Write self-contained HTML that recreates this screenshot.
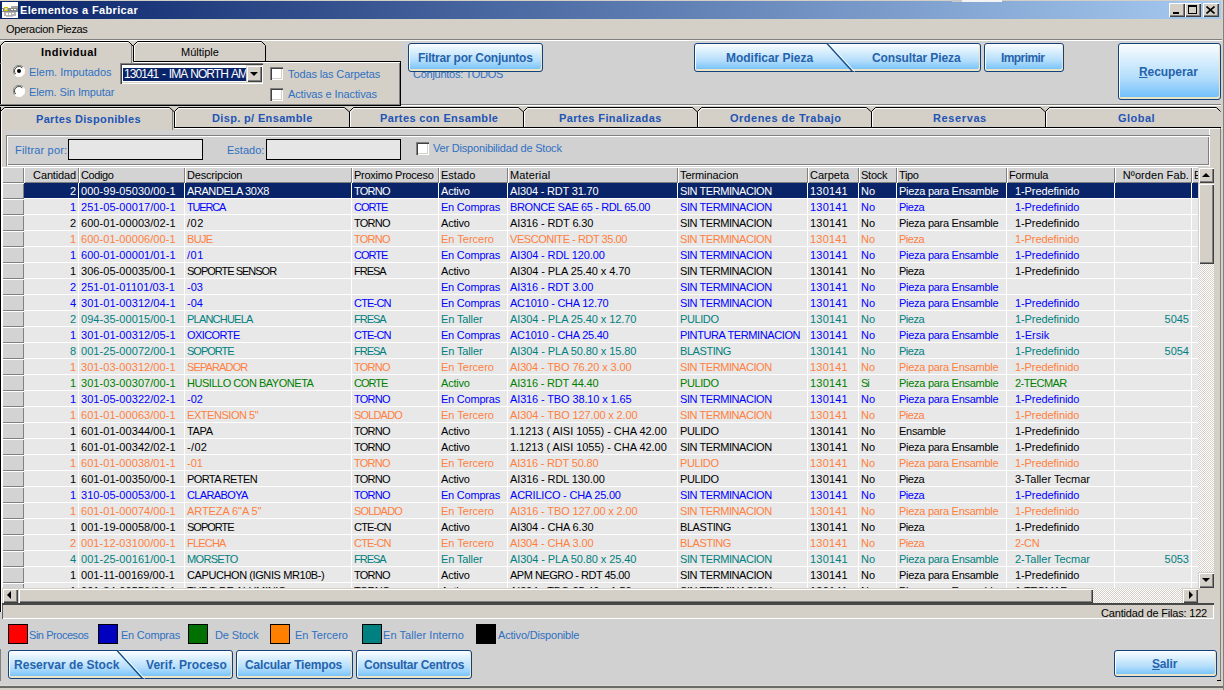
<!DOCTYPE html>
<html><head><meta charset="utf-8"><title>Elementos a Fabricar</title><style>
*{box-sizing:border-box;margin:0;padding:0}
html,body{width:1224px;height:690px;overflow:hidden;background:#d4d0c8;font-family:"Liberation Sans",sans-serif;font-size:11px;color:#000}
.a{position:absolute}
.t{position:absolute;white-space:pre;line-height:14px}
.b{font-weight:bold}
.btn{position:absolute;border:1px solid #10427e;border-radius:3px;background:linear-gradient(#fbfdff 0%,#d9effd 28%,#b3ddfb 62%,#6cbef9 100%);box-shadow:inset 1px 1px 0 #fff, inset -1px -2px 0 #ede4c6}
.bt{position:absolute;white-space:pre;color:#2563ad;font-weight:bold;font-size:12px;line-height:14px}
.lbl{color:#2f70c2}
.cell{position:absolute;height:15px;overflow:hidden;white-space:pre;line-height:15px;padding-top:1px}
.hdr{position:absolute;height:15px;overflow:hidden;white-space:pre;line-height:15px;padding-top:1px;background:#d3d3d3;box-shadow:inset 1px 1px 0 #fff,inset -1px -1px 0 #808080}
.tab{position:absolute;color:#2254b4;font-weight:bold;white-space:pre;line-height:14px;text-align:center}
.sb{position:absolute;background:#d4d0c8;box-shadow:inset 1px 1px 0 #d4d0c8,inset 2px 2px 0 #fff,inset -1px -1px 0 #404040,inset -2px -2px 0 #808080}
.chk{position:absolute;width:13px;height:13px;background:#fff;box-shadow:inset 1px 1px 0 #808080,inset 2px 2px 0 #404040,inset -1px -1px 0 #fff,inset -2px -2px 0 #d4d0c8}
</style></head><body>
<div class="a" style="left:0;top:1px;width:1221px;height:18px;background:linear-gradient(90deg,#0a246a 0%,#a6caf0 100%)"></div>
<div class="a" style="left:1223px;top:0;width:1px;height:690px;background:#808080"></div>
<div class="a" style="left:2px;top:2px;width:16px;height:16px;background:#fff"></div>
<svg class="a" style="left:2px;top:2px" width="16" height="16" shape-rendering="crispEdges"><rect x="0" y="6" width="16" height="4" fill="#8a8a8a"/><rect x="9" y="4" width="7" height="2" fill="#a8a8a8"/><rect x="2" y="10" width="12" height="4" fill="#b4b4b4"/><rect x="4" y="14" width="7" height="1" fill="#c8c8c8"/><rect x="9" y="7" width="2" height="1" fill="#fff"/><rect x="12" y="7" width="2" height="1" fill="#fff"/><rect x="0" y="7" width="1" height="2" fill="#fff"/><rect x="4" y="11" width="2" height="2" fill="#fff"/><rect x="7" y="11" width="2" height="2" fill="#fff"/><rect x="10" y="11" width="2" height="1" fill="#fff"/><rect x="2" y="5" width="4" height="4" rx="1" fill="#c4c400"/><rect x="3" y="6" width="2" height="2" fill="#d8d8f0"/></svg>
<div class="t b" style="left:20px;top:3px;color:#fff;font-size:11px;letter-spacing:0.342px">Elementos a Fabricar</div>
<div class="a" style="left:952px;top:0;width:10px;height:2px;background:#c8c8c8"></div><div class="a" style="left:962px;top:0;width:40px;height:2px;background:#f4f4f4"></div>
<div class="a" style="left:1169px;top:3px;width:16px;height:14px;background:#d4d0c8;box-shadow:inset 1px 1px 0 #fff,inset -1px -1px 0 #404040,inset -2px -2px 0 #808080"></div>
<div class="a" style="left:1185px;top:3px;width:16px;height:14px;background:#d4d0c8;box-shadow:inset 1px 1px 0 #fff,inset -1px -1px 0 #404040,inset -2px -2px 0 #808080"></div>
<div class="a" style="left:1203px;top:3px;width:16px;height:14px;background:#d4d0c8;box-shadow:inset 1px 1px 0 #fff,inset -1px -1px 0 #404040,inset -2px -2px 0 #808080"></div>
<div class="a" style="left:1173px;top:12px;width:6px;height:2px;background:#000"></div>
<div class="a" style="left:1188px;top:5px;width:9px;height:9px;border:1px solid #000;border-top-width:2px"></div>
<svg class="a" style="left:1206px;top:6px" width="9" height="8"><path d="M0.5 0.5 L8.5 7.5 M8.5 0.5 L0.5 7.5" stroke="#000" stroke-width="1.6"/></svg>
<div class="t " style="left:6px;top:22px;letter-spacing:-0.333px;">Operacion Piezas</div>
<div class="a" style="left:0;top:39px;width:1222px;height:1px;background:#808080"></div>
<div class="a" style="left:0;top:40px;width:1222px;height:1px;background:#fff"></div>
<div class="a" style="left:401px;top:41px;width:820px;height:63px;background:#d1d1d1"></div>
<div class="a" style="left:401px;top:104px;width:820px;height:1px;background:#808080"></div>
<div class="a" style="left:401px;top:105px;width:820px;height:1px;background:#fff"></div>
<div class="a" style="left:0;top:45px;width:1px;height:60px;background:#000"></div>
<div class="a" style="left:1px;top:45px;width:1px;height:59px;background:#fff"></div>
<div class="a" style="left:0;top:104px;width:401px;height:1px;background:#808080"></div>
<div class="a" style="left:0;top:105px;width:401px;height:1px;background:#000"></div>
<div class="a" style="left:399px;top:62px;width:1px;height:42px;background:#808080"></div>
<div class="a" style="left:400px;top:61px;width:1px;height:45px;background:#000"></div>
<svg class="a" style="left:0;top:40px" width="402" height="24">
<path d="M0.5 24 V5.5 L4.5 1.5 H128.5 L133 6 V24 Z" fill="#d4d0c8" stroke="none"/>
<path d="M0.5 23 V5.5 L4.5 1.5 H128.5 L133 6" fill="none" stroke="#000"/>
<path d="M1.5 23 V5.9 L4.9 2.5 H128" fill="none" stroke="#fff"/>
<path d="M131.5 5 V24" stroke="#808080"/>
<path d="M133.5 21.5 V5.5 L137.5 1.5 H261.5 L265.5 5.5 V21.5 Z" fill="#d4d0c8" stroke="#000"/>
<path d="M134.5 21 V5.9 L137.9 2.5 H261" fill="none" stroke="#fff"/>
<path d="M265 21.5 H400.5 V24" fill="none" stroke="#000"/>
<path d="M134 22.5 H400" stroke="#fff"/>
</svg>
<div class="t b" style="left:41px;top:45px;letter-spacing:0.5px">Individual</div>
<div class="t " style="left:181px;top:45px;letter-spacing:0.0px;">Múltiple</div>
<svg class="a" style="left:13px;top:65px" width="12" height="12"><circle cx="6" cy="6" r="5.5" fill="#fff"/><path d="M10.2 2.2 A5.5 5.5 0 0 0 1.8 9.8" stroke="#808080" fill="none"/><path d="M9.3 2.9 A4.5 4.5 0 0 0 2.7 9.1" stroke="#404040" fill="none"/><path d="M1.8 9.8 A5.5 5.5 0 0 0 10.2 2.2" stroke="#fff" fill="none"/><circle cx=6 cy=6 r=2 fill=#000 /></svg>
<div class="t lbl" style="left:29px;top:65px;letter-spacing:0.0px;">Elem. Imputados</div>
<svg class="a" style="left:13px;top:85px" width="12" height="12"><circle cx="6" cy="6" r="5.5" fill="#fff"/><path d="M10.2 2.2 A5.5 5.5 0 0 0 1.8 9.8" stroke="#808080" fill="none"/><path d="M9.3 2.9 A4.5 4.5 0 0 0 2.7 9.1" stroke="#404040" fill="none"/><path d="M1.8 9.8 A5.5 5.5 0 0 0 10.2 2.2" stroke="#fff" fill="none"/></svg>
<div class="t lbl" style="left:29px;top:85px;letter-spacing:-0.125px;">Elem. Sin Imputar</div>
<div class="a" style="left:120px;top:63px;width:143px;height:21px;background:#fff;box-shadow:inset 1px 1px 0 #808080,inset 2px 2px 0 #404040,inset -1px -1px 0 #fff,inset -2px -2px 0 #d4d0c8"></div>
<div class="t" style="left:123px;top:68px;width:123px;height:13px;background:#0a246a;color:#fff;line-height:13px;overflow:hidden;font-size:12px;letter-spacing:-0.95px;word-spacing:1.3px;padding-left:1px">130141 - IMA NORTH AMERICA</div>
<div class="sb" style="left:246px;top:65px;width:16px;height:17px"></div>
<div class="a" style="left:250px;top:72px;width:0;height:0;border-left:4px solid transparent;border-right:4px solid transparent;border-top:4px solid #000"></div>
<div class="chk" style="left:270px;top:67px"></div>
<div class="t lbl" style="left:288px;top:67px;letter-spacing:-0.118px;">Todas las Carpetas</div>
<div class="chk" style="left:270px;top:88px"></div>
<div class="t lbl" style="left:288px;top:87px;letter-spacing:-0.111px;">Activas e Inactivas</div>
<div class="t lbl" style="left:413px;top:67px;letter-spacing:-0.267px;">Conjuntos: TODOS</div>
<div class="btn" style="left:408px;top:43px;width:135px;height:29px"></div>
<div class="bt" style="left:418px;top:51px;letter-spacing:-0.225px">Filtrar por Conjuntos</div>
<div class="btn" style="left:694px;top:43px;width:287px;height:29px"></div>
<svg class="a" style="left:826px;top:43px" width="30" height="29"><path d="M1 0.5 L26.5 28.5" stroke="#154a84" stroke-width="1.3" fill="none"/><path d="M3 0.5 L28.5 28.5" stroke="#fff" stroke-width="1" fill="none"/></svg>
<div class="bt" style="left:726px;top:51px;letter-spacing:-0.014px">Modificar Pieza</div>
<div class="bt" style="left:872px;top:51px;letter-spacing:-0.1px">Consultar Pieza</div>
<div class="btn" style="left:984px;top:43px;width:80px;height:29px"></div>
<div class="bt" style="left:1001px;top:51px;letter-spacing:-0.586px">Imprimir</div>
<div class="btn" style="left:1118px;top:43px;width:103px;height:57px"></div>
<div class="bt" style="left:1139px;top:65px;letter-spacing:-0.062px"><u>R</u>ecuperar</div>
<div class="a" style="left:0;top:107px;width:1px;height:505px;background:#000"></div>
<div class="a" style="left:1px;top:111px;width:1px;height:501px;background:#fff"></div><div class="a" style="left:0;top:612px;width:2px;height:7px;background:#d1d1d1"></div>
<div class="a" style="left:2px;top:128px;width:1219px;height:490px;background:#d4d0c8"></div>
<div class="a" style="left:6px;top:129px;width:1204px;height:475px;background:#d1d1d1"></div>
<svg class="a" style="left:0;top:106px" width="1224" height="24"><path d="M1045.5 21.5 V5.5 L1049.5 1.5 H1216.5 L1221.5 6 V21.5 Z" fill="#d4d0c8" stroke="none"/><path d="M1045.5 21.5 V5.5 L1049.5 1.5 H1216.5 L1220.5 5.5 M1045 21.5 H1221" fill="none" stroke="#000"/><path d="M1046.5 21 V5.9 L1049.9 2.5 H1216" fill="none" stroke="#fff"/><path d="M1045 22.5 H1222" stroke="#fff"/><path d="M871.5 21.5 V5.5 L875.5 1.5 H1040.5 L1045.5 6 V21.5 Z" fill="#d4d0c8" stroke="#000"/><path d="M872.5 21 V5.9 L875.9 2.5 H1040" fill="none" stroke="#fff"/><path d="M871 22.5 H1046" stroke="#fff"/><path d="M697.5 21.5 V5.5 L701.5 1.5 H866.5 L871.5 6 V21.5 Z" fill="#d4d0c8" stroke="#000"/><path d="M698.5 21 V5.9 L701.9 2.5 H866" fill="none" stroke="#fff"/><path d="M697 22.5 H872" stroke="#fff"/><path d="M523.5 21.5 V5.5 L527.5 1.5 H692.5 L697.5 6 V21.5 Z" fill="#d4d0c8" stroke="#000"/><path d="M524.5 21 V5.9 L527.9 2.5 H692" fill="none" stroke="#fff"/><path d="M523 22.5 H698" stroke="#fff"/><path d="M349.5 21.5 V5.5 L353.5 1.5 H518.5 L523.5 6 V21.5 Z" fill="#d4d0c8" stroke="#000"/><path d="M350.5 21 V5.9 L353.9 2.5 H518" fill="none" stroke="#fff"/><path d="M349 22.5 H524" stroke="#fff"/><path d="M174.5 21.5 V5.5 L178.5 1.5 H344.5 L349.5 6 V21.5 Z" fill="#d4d0c8" stroke="#000"/><path d="M175.5 21 V5.9 L178.9 2.5 H344" fill="none" stroke="#fff"/><path d="M174 22.5 H350" stroke="#fff"/><path d="M0.5 24 V5.5 L4.5 1.5 H169.5 L174.5 6 V24 H0.5" fill="#d4d0c8" stroke="none"/><path d="M0.5 24 V5.5 L4.5 1.5 H169.5 L174.5 6" fill="none" stroke="#000"/><path d="M1.5 24 V5.9 L4.9 2.5 H169" fill="none" stroke="#fff"/><path d="M172.5 5 V24" stroke="#808080"/><path d="M174.5 6 V22" stroke="#000"/></svg>
<div class="tab" style="left:36px;top:112px;text-align:left;letter-spacing:0.324px">Partes Disponibles</div>
<div class="tab" style="left:212px;top:111px;text-align:left;letter-spacing:0.35px">Disp. p/ Ensamble</div>
<div class="tab" style="left:380px;top:111px;text-align:left;letter-spacing:0.372px">Partes con Ensamble</div>
<div class="tab" style="left:559px;top:111px;text-align:left;letter-spacing:0.371px">Partes Finalizadas</div>
<div class="tab" style="left:730px;top:111px;text-align:left;letter-spacing:0.488px">Ordenes de Trabajo</div>
<div class="tab" style="left:933px;top:111px;text-align:left;letter-spacing:0.614px">Reservas</div>
<div class="tab" style="left:1118px;top:111px;text-align:left;letter-spacing:0.48px">Global</div>
<div class="a" style="left:1209px;top:129px;width:1px;height:38px;background:#fff"></div>
<div class="a" style="left:6px;top:135px;width:1204px;height:31px;box-shadow:inset 1px 1px 0 #808080,inset 2px 2px 0 #fff,inset -1px -1px 0 #fff,inset -2px -2px 0 #808080"></div>
<div class="t lbl" style="left:15px;top:143px;letter-spacing:0.182px;">Filtrar por:</div>
<div class="a" style="left:68px;top:139px;width:135px;height:21px;background:#e6e6e6;border:1px solid #000"></div>
<div class="t lbl" style="left:227px;top:143px;letter-spacing:0.0px;">Estado:</div>
<div class="a" style="left:266px;top:139px;width:135px;height:21px;background:#e6e6e6;border:1px solid #000"></div>
<div class="chk" style="left:416px;top:142px"></div>
<div class="t lbl" style="left:433px;top:141px;letter-spacing:-0.192px;">Ver Disponibilidad de Stock</div>
<div class="a" style="left:2px;top:167px;width:1196px;height:421px;background:#fff;overflow:hidden">
<div class="hdr" style="left:0;top:0;width:22px;height:16px"></div>
<div class="hdr" style="left:22px;top:0;width:55px;height:16px;text-align:right;padding-right:3px;letter-spacing:-0.143px">Cantidad</div>
<div class="hdr" style="left:77px;top:0;width:106px;height:16px;padding-left:2px;letter-spacing:-0.4px">Codigo</div>
<div class="hdr" style="left:183px;top:0;width:167px;height:16px;padding-left:2px;letter-spacing:-0.2px">Descripcion</div>
<div class="hdr" style="left:350px;top:0;width:87px;height:16px;padding-left:2px;letter-spacing:-0.286px">Proximo Proceso</div>
<div class="hdr" style="left:437px;top:0;width:69px;height:16px;padding-left:2px;letter-spacing:0.0px">Estado</div>
<div class="hdr" style="left:506px;top:0;width:170px;height:16px;padding-left:2px;letter-spacing:0.143px">Material</div>
<div class="hdr" style="left:676px;top:0;width:130px;height:16px;padding-left:2px;letter-spacing:-0.1px">Terminacion</div>
<div class="hdr" style="left:806px;top:0;width:51px;height:16px;padding-left:2px;letter-spacing:0.0px">Carpeta</div>
<div class="hdr" style="left:857px;top:0;width:38px;height:16px;padding-left:2px;letter-spacing:-0.25px">Stock</div>
<div class="hdr" style="left:895px;top:0;width:110px;height:16px;padding-left:2px;letter-spacing:-0.333px">Tipo</div>
<div class="hdr" style="left:1005px;top:0;width:108px;height:16px;padding-left:2px;letter-spacing:-0.167px">Formula</div>
<div class="hdr" style="left:1113px;top:0;width:77px;height:16px;text-align:right;padding-right:3px;letter-spacing:0.091px">Nºorden Fab.</div>
<div class="hdr" style="left:1190px;top:0;width:8px;height:16px;padding-left:2px;letter-spacing:0px">E</div>
<div class="hdr" style="left:0;top:16px;width:22px;height:16px"></div>
<div class="cell" style="left:22px;top:16px;width:54px;background:#0a246a;color:#ffffff;text-align:right;padding-right:2px;letter-spacing:0px">2</div>
<div class="cell" style="left:77px;top:16px;width:105px;background:#0a246a;color:#ffffff;padding-left:2px;letter-spacing:0.062px">000-99-05030/00-1</div>
<div class="cell" style="left:183px;top:16px;width:166px;background:#0a246a;color:#ffffff;padding-left:2px;letter-spacing:-0.417px">ARANDELA 30X8</div>
<div class="cell" style="left:350px;top:16px;width:86px;background:#0a246a;color:#ffffff;padding-left:2px;letter-spacing:-0.75px">TORNO</div>
<div class="cell" style="left:437px;top:16px;width:68px;background:#0a246a;color:#ffffff;padding-left:2px;letter-spacing:-0.2px">Activo</div>
<div class="cell" style="left:506px;top:16px;width:169px;background:#0a246a;color:#ffffff;padding-left:2px;letter-spacing:-0.188px">AI304 - RDT 31.70</div>
<div class="cell" style="left:676px;top:16px;width:129px;background:#0a246a;color:#ffffff;padding-left:2px;letter-spacing:-0.429px">SIN TERMINACION</div>
<div class="cell" style="left:806px;top:16px;width:50px;background:#0a246a;color:#ffffff;padding-left:2px;letter-spacing:0.2px">130141</div>
<div class="cell" style="left:857px;top:16px;width:37px;background:#0a246a;color:#ffffff;padding-left:2px;letter-spacing:0.0px">No</div>
<div class="cell" style="left:895px;top:16px;width:109px;background:#0a246a;color:#ffffff;padding-left:2px;letter-spacing:-0.278px">Pieza para Ensamble</div>
<div class="cell" style="left:1005px;top:16px;width:107px;background:#0a246a;color:#ffffff;padding-left:8px;letter-spacing:-0.083px">1-Predefinido</div>
<div class="cell" style="left:1113px;top:16px;width:76px;background:#0a246a;color:#ffffff;text-align:right;padding-right:2px;letter-spacing:0px"></div>
<div class="cell" style="left:1190px;top:16px;width:6px;background:#0a246a;color:#ffffff;padding-left:2px;letter-spacing:0px"></div>
<div class="hdr" style="left:0;top:32px;width:22px;height:16px"></div>
<div class="cell" style="left:22px;top:32px;width:54px;background:#e8e8e8;color:#0000ff;text-align:right;padding-right:2px;letter-spacing:0px">1</div>
<div class="cell" style="left:77px;top:32px;width:105px;background:#e8e8e8;color:#0000ff;padding-left:2px;letter-spacing:0.062px">251-05-00017/00-1</div>
<div class="cell" style="left:183px;top:32px;width:166px;background:#e8e8e8;color:#0000ff;padding-left:2px;letter-spacing:-1.2px">TUERCA</div>
<div class="cell" style="left:350px;top:32px;width:86px;background:#e8e8e8;color:#0000ff;padding-left:2px;letter-spacing:-1.0px">CORTE</div>
<div class="cell" style="left:437px;top:32px;width:68px;background:#e8e8e8;color:#0000ff;padding-left:2px;letter-spacing:-0.222px">En Compras</div>
<div class="cell" style="left:506px;top:32px;width:169px;background:#e8e8e8;color:#0000ff;padding-left:2px;letter-spacing:-0.375px">BRONCE SAE 65 - RDL 65.00</div>
<div class="cell" style="left:676px;top:32px;width:129px;background:#e8e8e8;color:#0000ff;padding-left:2px;letter-spacing:-0.429px">SIN TERMINACION</div>
<div class="cell" style="left:806px;top:32px;width:50px;background:#e8e8e8;color:#0000ff;padding-left:2px;letter-spacing:0.2px">130141</div>
<div class="cell" style="left:857px;top:32px;width:37px;background:#e8e8e8;color:#0000ff;padding-left:2px;letter-spacing:0.0px">No</div>
<div class="cell" style="left:895px;top:32px;width:109px;background:#e8e8e8;color:#0000ff;padding-left:2px;letter-spacing:-0.5px">Pieza</div>
<div class="cell" style="left:1005px;top:32px;width:107px;background:#e8e8e8;color:#0000ff;padding-left:8px;letter-spacing:-0.083px">1-Predefinido</div>
<div class="cell" style="left:1113px;top:32px;width:76px;background:#e8e8e8;color:#0000ff;text-align:right;padding-right:2px;letter-spacing:0px"></div>
<div class="cell" style="left:1190px;top:32px;width:6px;background:#e8e8e8;color:#0000ff;padding-left:2px;letter-spacing:0px"></div>
<div class="hdr" style="left:0;top:48px;width:22px;height:16px"></div>
<div class="cell" style="left:22px;top:48px;width:54px;background:#e8e8e8;color:#000000;text-align:right;padding-right:2px;letter-spacing:0px">2</div>
<div class="cell" style="left:77px;top:48px;width:105px;background:#e8e8e8;color:#000000;padding-left:2px;letter-spacing:0.062px">600-01-00003/02-1</div>
<div class="cell" style="left:183px;top:48px;width:166px;background:#e8e8e8;color:#000000;padding-left:2px;letter-spacing:0.5px">/02</div>
<div class="cell" style="left:350px;top:48px;width:86px;background:#e8e8e8;color:#000000;padding-left:2px;letter-spacing:-0.75px">TORNO</div>
<div class="cell" style="left:437px;top:48px;width:68px;background:#e8e8e8;color:#000000;padding-left:2px;letter-spacing:-0.2px">Activo</div>
<div class="cell" style="left:506px;top:48px;width:169px;background:#e8e8e8;color:#000000;padding-left:2px;letter-spacing:-0.133px">AI316 - RDT 6.30</div>
<div class="cell" style="left:676px;top:48px;width:129px;background:#e8e8e8;color:#000000;padding-left:2px;letter-spacing:-0.429px">SIN TERMINACION</div>
<div class="cell" style="left:806px;top:48px;width:50px;background:#e8e8e8;color:#000000;padding-left:2px;letter-spacing:0.2px">130141</div>
<div class="cell" style="left:857px;top:48px;width:37px;background:#e8e8e8;color:#000000;padding-left:2px;letter-spacing:0.0px">No</div>
<div class="cell" style="left:895px;top:48px;width:109px;background:#e8e8e8;color:#000000;padding-left:2px;letter-spacing:-0.278px">Pieza para Ensamble</div>
<div class="cell" style="left:1005px;top:48px;width:107px;background:#e8e8e8;color:#000000;padding-left:8px;letter-spacing:-0.083px">1-Predefinido</div>
<div class="cell" style="left:1113px;top:48px;width:76px;background:#e8e8e8;color:#000000;text-align:right;padding-right:2px;letter-spacing:0px"></div>
<div class="cell" style="left:1190px;top:48px;width:6px;background:#e8e8e8;color:#000000;padding-left:2px;letter-spacing:0px"></div>
<div class="hdr" style="left:0;top:64px;width:22px;height:16px"></div>
<div class="cell" style="left:22px;top:64px;width:54px;background:#e8e8e8;color:#ff8040;text-align:right;padding-right:2px;letter-spacing:0px">1</div>
<div class="cell" style="left:77px;top:64px;width:105px;background:#e8e8e8;color:#ff8040;padding-left:2px;letter-spacing:0.062px">600-01-00006/00-1</div>
<div class="cell" style="left:183px;top:64px;width:166px;background:#e8e8e8;color:#ff8040;padding-left:2px;letter-spacing:-0.667px">BUJE</div>
<div class="cell" style="left:350px;top:64px;width:86px;background:#e8e8e8;color:#ff8040;padding-left:2px;letter-spacing:-0.75px">TORNO</div>
<div class="cell" style="left:437px;top:64px;width:68px;background:#e8e8e8;color:#ff8040;padding-left:2px;letter-spacing:0.0px">En Tercero</div>
<div class="cell" style="left:506px;top:64px;width:169px;background:#e8e8e8;color:#ff8040;padding-left:2px;letter-spacing:-0.45px">VESCONITE - RDT 35.00</div>
<div class="cell" style="left:676px;top:64px;width:129px;background:#e8e8e8;color:#ff8040;padding-left:2px;letter-spacing:-0.429px">SIN TERMINACION</div>
<div class="cell" style="left:806px;top:64px;width:50px;background:#e8e8e8;color:#ff8040;padding-left:2px;letter-spacing:0.2px">130141</div>
<div class="cell" style="left:857px;top:64px;width:37px;background:#e8e8e8;color:#ff8040;padding-left:2px;letter-spacing:0.0px">No</div>
<div class="cell" style="left:895px;top:64px;width:109px;background:#e8e8e8;color:#ff8040;padding-left:2px;letter-spacing:-0.5px">Pieza</div>
<div class="cell" style="left:1005px;top:64px;width:107px;background:#e8e8e8;color:#ff8040;padding-left:8px;letter-spacing:-0.083px">1-Predefinido</div>
<div class="cell" style="left:1113px;top:64px;width:76px;background:#e8e8e8;color:#ff8040;text-align:right;padding-right:2px;letter-spacing:0px"></div>
<div class="cell" style="left:1190px;top:64px;width:6px;background:#e8e8e8;color:#ff8040;padding-left:2px;letter-spacing:0px"></div>
<div class="hdr" style="left:0;top:80px;width:22px;height:16px"></div>
<div class="cell" style="left:22px;top:80px;width:54px;background:#e8e8e8;color:#0000ff;text-align:right;padding-right:2px;letter-spacing:0px">1</div>
<div class="cell" style="left:77px;top:80px;width:105px;background:#e8e8e8;color:#0000ff;padding-left:2px;letter-spacing:0.062px">600-01-00001/01-1</div>
<div class="cell" style="left:183px;top:80px;width:166px;background:#e8e8e8;color:#0000ff;padding-left:2px;letter-spacing:0.5px">/01</div>
<div class="cell" style="left:350px;top:80px;width:86px;background:#e8e8e8;color:#0000ff;padding-left:2px;letter-spacing:-1.0px">CORTE</div>
<div class="cell" style="left:437px;top:80px;width:68px;background:#e8e8e8;color:#0000ff;padding-left:2px;letter-spacing:-0.222px">En Compras</div>
<div class="cell" style="left:506px;top:80px;width:169px;background:#e8e8e8;color:#0000ff;padding-left:2px;letter-spacing:-0.118px">AI304 - RDL 120.00</div>
<div class="cell" style="left:676px;top:80px;width:129px;background:#e8e8e8;color:#0000ff;padding-left:2px;letter-spacing:-0.429px">SIN TERMINACION</div>
<div class="cell" style="left:806px;top:80px;width:50px;background:#e8e8e8;color:#0000ff;padding-left:2px;letter-spacing:0.2px">130141</div>
<div class="cell" style="left:857px;top:80px;width:37px;background:#e8e8e8;color:#0000ff;padding-left:2px;letter-spacing:0.0px">No</div>
<div class="cell" style="left:895px;top:80px;width:109px;background:#e8e8e8;color:#0000ff;padding-left:2px;letter-spacing:-0.278px">Pieza para Ensamble</div>
<div class="cell" style="left:1005px;top:80px;width:107px;background:#e8e8e8;color:#0000ff;padding-left:8px;letter-spacing:-0.083px">1-Predefinido</div>
<div class="cell" style="left:1113px;top:80px;width:76px;background:#e8e8e8;color:#0000ff;text-align:right;padding-right:2px;letter-spacing:0px"></div>
<div class="cell" style="left:1190px;top:80px;width:6px;background:#e8e8e8;color:#0000ff;padding-left:2px;letter-spacing:0px"></div>
<div class="hdr" style="left:0;top:96px;width:22px;height:16px"></div>
<div class="cell" style="left:22px;top:96px;width:54px;background:#e8e8e8;color:#000000;text-align:right;padding-right:2px;letter-spacing:0px">1</div>
<div class="cell" style="left:77px;top:96px;width:105px;background:#e8e8e8;color:#000000;padding-left:2px;letter-spacing:0.062px">306-05-00035/00-1</div>
<div class="cell" style="left:183px;top:96px;width:166px;background:#e8e8e8;color:#000000;padding-left:2px;letter-spacing:-1.0px">SOPORTE SENSOR</div>
<div class="cell" style="left:350px;top:96px;width:86px;background:#e8e8e8;color:#000000;padding-left:2px;letter-spacing:-1.0px">FRESA</div>
<div class="cell" style="left:437px;top:96px;width:68px;background:#e8e8e8;color:#000000;padding-left:2px;letter-spacing:-0.2px">Activo</div>
<div class="cell" style="left:506px;top:96px;width:169px;background:#e8e8e8;color:#000000;padding-left:2px;letter-spacing:-0.087px">AI304 - PLA 25.40 x 4.70</div>
<div class="cell" style="left:676px;top:96px;width:129px;background:#e8e8e8;color:#000000;padding-left:2px;letter-spacing:-0.429px">SIN TERMINACION</div>
<div class="cell" style="left:806px;top:96px;width:50px;background:#e8e8e8;color:#000000;padding-left:2px;letter-spacing:0.2px">130141</div>
<div class="cell" style="left:857px;top:96px;width:37px;background:#e8e8e8;color:#000000;padding-left:2px;letter-spacing:0.0px">No</div>
<div class="cell" style="left:895px;top:96px;width:109px;background:#e8e8e8;color:#000000;padding-left:2px;letter-spacing:-0.5px">Pieza</div>
<div class="cell" style="left:1005px;top:96px;width:107px;background:#e8e8e8;color:#000000;padding-left:8px;letter-spacing:-0.083px">1-Predefinido</div>
<div class="cell" style="left:1113px;top:96px;width:76px;background:#e8e8e8;color:#000000;text-align:right;padding-right:2px;letter-spacing:0px"></div>
<div class="cell" style="left:1190px;top:96px;width:6px;background:#e8e8e8;color:#000000;padding-left:2px;letter-spacing:0px"></div>
<div class="hdr" style="left:0;top:112px;width:22px;height:16px"></div>
<div class="cell" style="left:22px;top:112px;width:54px;background:#e8e8e8;color:#0000ff;text-align:right;padding-right:2px;letter-spacing:0px">2</div>
<div class="cell" style="left:77px;top:112px;width:105px;background:#e8e8e8;color:#0000ff;padding-left:2px;letter-spacing:0.062px">251-01-01101/03-1</div>
<div class="cell" style="left:183px;top:112px;width:166px;background:#e8e8e8;color:#0000ff;padding-left:2px;letter-spacing:0.0px">-03</div>
<div class="cell" style="left:350px;top:112px;width:86px;background:#e8e8e8;color:#0000ff;padding-left:2px;letter-spacing:0px"></div>
<div class="cell" style="left:437px;top:112px;width:68px;background:#e8e8e8;color:#0000ff;padding-left:2px;letter-spacing:-0.222px">En Compras</div>
<div class="cell" style="left:506px;top:112px;width:169px;background:#e8e8e8;color:#0000ff;padding-left:2px;letter-spacing:-0.133px">AI316 - RDT 3.00</div>
<div class="cell" style="left:676px;top:112px;width:129px;background:#e8e8e8;color:#0000ff;padding-left:2px;letter-spacing:-0.429px">SIN TERMINACION</div>
<div class="cell" style="left:806px;top:112px;width:50px;background:#e8e8e8;color:#0000ff;padding-left:2px;letter-spacing:0.2px">130141</div>
<div class="cell" style="left:857px;top:112px;width:37px;background:#e8e8e8;color:#0000ff;padding-left:2px;letter-spacing:0.0px">No</div>
<div class="cell" style="left:895px;top:112px;width:109px;background:#e8e8e8;color:#0000ff;padding-left:2px;letter-spacing:-0.278px">Pieza para Ensamble</div>
<div class="cell" style="left:1005px;top:112px;width:107px;background:#e8e8e8;color:#0000ff;padding-left:2px;letter-spacing:0px"></div>
<div class="cell" style="left:1113px;top:112px;width:76px;background:#e8e8e8;color:#0000ff;text-align:right;padding-right:2px;letter-spacing:0px"></div>
<div class="cell" style="left:1190px;top:112px;width:6px;background:#e8e8e8;color:#0000ff;padding-left:2px;letter-spacing:0px"></div>
<div class="hdr" style="left:0;top:128px;width:22px;height:16px"></div>
<div class="cell" style="left:22px;top:128px;width:54px;background:#e8e8e8;color:#0000ff;text-align:right;padding-right:2px;letter-spacing:0px">4</div>
<div class="cell" style="left:77px;top:128px;width:105px;background:#e8e8e8;color:#0000ff;padding-left:2px;letter-spacing:0.062px">301-01-00312/04-1</div>
<div class="cell" style="left:183px;top:128px;width:166px;background:#e8e8e8;color:#0000ff;padding-left:2px;letter-spacing:0.0px">-04</div>
<div class="cell" style="left:350px;top:128px;width:86px;background:#e8e8e8;color:#0000ff;padding-left:2px;letter-spacing:-0.8px">CTE-CN</div>
<div class="cell" style="left:437px;top:128px;width:68px;background:#e8e8e8;color:#0000ff;padding-left:2px;letter-spacing:-0.222px">En Compras</div>
<div class="cell" style="left:506px;top:128px;width:169px;background:#e8e8e8;color:#0000ff;padding-left:2px;letter-spacing:-0.235px">AC1010 - CHA 12.70</div>
<div class="cell" style="left:676px;top:128px;width:129px;background:#e8e8e8;color:#0000ff;padding-left:2px;letter-spacing:-0.429px">SIN TERMINACION</div>
<div class="cell" style="left:806px;top:128px;width:50px;background:#e8e8e8;color:#0000ff;padding-left:2px;letter-spacing:0.2px">130141</div>
<div class="cell" style="left:857px;top:128px;width:37px;background:#e8e8e8;color:#0000ff;padding-left:2px;letter-spacing:0.0px">No</div>
<div class="cell" style="left:895px;top:128px;width:109px;background:#e8e8e8;color:#0000ff;padding-left:2px;letter-spacing:-0.278px">Pieza para Ensamble</div>
<div class="cell" style="left:1005px;top:128px;width:107px;background:#e8e8e8;color:#0000ff;padding-left:8px;letter-spacing:-0.083px">1-Predefinido</div>
<div class="cell" style="left:1113px;top:128px;width:76px;background:#e8e8e8;color:#0000ff;text-align:right;padding-right:2px;letter-spacing:0px"></div>
<div class="cell" style="left:1190px;top:128px;width:6px;background:#e8e8e8;color:#0000ff;padding-left:2px;letter-spacing:0px"></div>
<div class="hdr" style="left:0;top:144px;width:22px;height:16px"></div>
<div class="cell" style="left:22px;top:144px;width:54px;background:#e8e8e8;color:#008080;text-align:right;padding-right:2px;letter-spacing:0px">2</div>
<div class="cell" style="left:77px;top:144px;width:105px;background:#e8e8e8;color:#008080;padding-left:2px;letter-spacing:0.062px">094-35-00015/00-1</div>
<div class="cell" style="left:183px;top:144px;width:166px;background:#e8e8e8;color:#008080;padding-left:2px;letter-spacing:-0.778px">PLANCHUELA</div>
<div class="cell" style="left:350px;top:144px;width:86px;background:#e8e8e8;color:#008080;padding-left:2px;letter-spacing:-1.0px">FRESA</div>
<div class="cell" style="left:437px;top:144px;width:68px;background:#e8e8e8;color:#008080;padding-left:2px;letter-spacing:-0.125px">En Taller</div>
<div class="cell" style="left:506px;top:144px;width:169px;background:#e8e8e8;color:#008080;padding-left:2px;letter-spacing:-0.083px">AI304 - PLA 25.40 x 12.70</div>
<div class="cell" style="left:676px;top:144px;width:129px;background:#e8e8e8;color:#008080;padding-left:2px;letter-spacing:-0.4px">PULIDO</div>
<div class="cell" style="left:806px;top:144px;width:50px;background:#e8e8e8;color:#008080;padding-left:2px;letter-spacing:0.2px">130141</div>
<div class="cell" style="left:857px;top:144px;width:37px;background:#e8e8e8;color:#008080;padding-left:2px;letter-spacing:0.0px">No</div>
<div class="cell" style="left:895px;top:144px;width:109px;background:#e8e8e8;color:#008080;padding-left:2px;letter-spacing:-0.5px">Pieza</div>
<div class="cell" style="left:1005px;top:144px;width:107px;background:#e8e8e8;color:#008080;padding-left:8px;letter-spacing:-0.083px">1-Predefinido</div>
<div class="cell" style="left:1113px;top:144px;width:76px;background:#e8e8e8;color:#008080;text-align:right;padding-right:2px;letter-spacing:0.0px">5045</div>
<div class="cell" style="left:1190px;top:144px;width:6px;background:#e8e8e8;color:#008080;padding-left:2px;letter-spacing:0px"></div>
<div class="hdr" style="left:0;top:160px;width:22px;height:16px"></div>
<div class="cell" style="left:22px;top:160px;width:54px;background:#e8e8e8;color:#0000ff;text-align:right;padding-right:2px;letter-spacing:0px">1</div>
<div class="cell" style="left:77px;top:160px;width:105px;background:#e8e8e8;color:#0000ff;padding-left:2px;letter-spacing:0.062px">301-01-00312/05-1</div>
<div class="cell" style="left:183px;top:160px;width:166px;background:#e8e8e8;color:#0000ff;padding-left:2px;letter-spacing:-0.571px">OXICORTE</div>
<div class="cell" style="left:350px;top:160px;width:86px;background:#e8e8e8;color:#0000ff;padding-left:2px;letter-spacing:-0.8px">CTE-CN</div>
<div class="cell" style="left:437px;top:160px;width:68px;background:#e8e8e8;color:#0000ff;padding-left:2px;letter-spacing:-0.222px">En Compras</div>
<div class="cell" style="left:506px;top:160px;width:169px;background:#e8e8e8;color:#0000ff;padding-left:2px;letter-spacing:-0.235px">AC1010 - CHA 25.40</div>
<div class="cell" style="left:676px;top:160px;width:129px;background:#e8e8e8;color:#0000ff;padding-left:2px;letter-spacing:-0.389px">PINTURA TERMINACION</div>
<div class="cell" style="left:806px;top:160px;width:50px;background:#e8e8e8;color:#0000ff;padding-left:2px;letter-spacing:0.2px">130141</div>
<div class="cell" style="left:857px;top:160px;width:37px;background:#e8e8e8;color:#0000ff;padding-left:2px;letter-spacing:0.0px">No</div>
<div class="cell" style="left:895px;top:160px;width:109px;background:#e8e8e8;color:#0000ff;padding-left:2px;letter-spacing:-0.278px">Pieza para Ensamble</div>
<div class="cell" style="left:1005px;top:160px;width:107px;background:#e8e8e8;color:#0000ff;padding-left:8px;letter-spacing:0.0px">1-Ersik</div>
<div class="cell" style="left:1113px;top:160px;width:76px;background:#e8e8e8;color:#0000ff;text-align:right;padding-right:2px;letter-spacing:0px"></div>
<div class="cell" style="left:1190px;top:160px;width:6px;background:#e8e8e8;color:#0000ff;padding-left:2px;letter-spacing:0px"></div>
<div class="hdr" style="left:0;top:176px;width:22px;height:16px"></div>
<div class="cell" style="left:22px;top:176px;width:54px;background:#e8e8e8;color:#008080;text-align:right;padding-right:2px;letter-spacing:0px">8</div>
<div class="cell" style="left:77px;top:176px;width:105px;background:#e8e8e8;color:#008080;padding-left:2px;letter-spacing:0.062px">001-25-00072/00-1</div>
<div class="cell" style="left:183px;top:176px;width:166px;background:#e8e8e8;color:#008080;padding-left:2px;letter-spacing:-1.0px">SOPORTE</div>
<div class="cell" style="left:350px;top:176px;width:86px;background:#e8e8e8;color:#008080;padding-left:2px;letter-spacing:-1.0px">FRESA</div>
<div class="cell" style="left:437px;top:176px;width:68px;background:#e8e8e8;color:#008080;padding-left:2px;letter-spacing:-0.125px">En Taller</div>
<div class="cell" style="left:506px;top:176px;width:169px;background:#e8e8e8;color:#008080;padding-left:2px;letter-spacing:-0.083px">AI304 - PLA 50.80 x 15.80</div>
<div class="cell" style="left:676px;top:176px;width:129px;background:#e8e8e8;color:#008080;padding-left:2px;letter-spacing:-0.429px">BLASTING</div>
<div class="cell" style="left:806px;top:176px;width:50px;background:#e8e8e8;color:#008080;padding-left:2px;letter-spacing:0.2px">130141</div>
<div class="cell" style="left:857px;top:176px;width:37px;background:#e8e8e8;color:#008080;padding-left:2px;letter-spacing:0.0px">No</div>
<div class="cell" style="left:895px;top:176px;width:109px;background:#e8e8e8;color:#008080;padding-left:2px;letter-spacing:-0.5px">Pieza</div>
<div class="cell" style="left:1005px;top:176px;width:107px;background:#e8e8e8;color:#008080;padding-left:8px;letter-spacing:-0.083px">1-Predefinido</div>
<div class="cell" style="left:1113px;top:176px;width:76px;background:#e8e8e8;color:#008080;text-align:right;padding-right:2px;letter-spacing:0.0px">5054</div>
<div class="cell" style="left:1190px;top:176px;width:6px;background:#e8e8e8;color:#008080;padding-left:2px;letter-spacing:0px"></div>
<div class="hdr" style="left:0;top:192px;width:22px;height:16px"></div>
<div class="cell" style="left:22px;top:192px;width:54px;background:#e8e8e8;color:#ff8040;text-align:right;padding-right:2px;letter-spacing:0px">1</div>
<div class="cell" style="left:77px;top:192px;width:105px;background:#e8e8e8;color:#ff8040;padding-left:2px;letter-spacing:0.062px">301-03-00312/00-1</div>
<div class="cell" style="left:183px;top:192px;width:166px;background:#e8e8e8;color:#ff8040;padding-left:2px;letter-spacing:-0.875px">SEPARADOR</div>
<div class="cell" style="left:350px;top:192px;width:86px;background:#e8e8e8;color:#ff8040;padding-left:2px;letter-spacing:-0.75px">TORNO</div>
<div class="cell" style="left:437px;top:192px;width:68px;background:#e8e8e8;color:#ff8040;padding-left:2px;letter-spacing:0.0px">En Tercero</div>
<div class="cell" style="left:506px;top:192px;width:169px;background:#e8e8e8;color:#ff8040;padding-left:2px;letter-spacing:-0.13px">AI304 - TBO 76.20 x 3.00</div>
<div class="cell" style="left:676px;top:192px;width:129px;background:#e8e8e8;color:#ff8040;padding-left:2px;letter-spacing:-0.429px">SIN TERMINACION</div>
<div class="cell" style="left:806px;top:192px;width:50px;background:#e8e8e8;color:#ff8040;padding-left:2px;letter-spacing:0.2px">130141</div>
<div class="cell" style="left:857px;top:192px;width:37px;background:#e8e8e8;color:#ff8040;padding-left:2px;letter-spacing:0.0px">No</div>
<div class="cell" style="left:895px;top:192px;width:109px;background:#e8e8e8;color:#ff8040;padding-left:2px;letter-spacing:-0.278px">Pieza para Ensamble</div>
<div class="cell" style="left:1005px;top:192px;width:107px;background:#e8e8e8;color:#ff8040;padding-left:8px;letter-spacing:-0.083px">1-Predefinido</div>
<div class="cell" style="left:1113px;top:192px;width:76px;background:#e8e8e8;color:#ff8040;text-align:right;padding-right:2px;letter-spacing:0px"></div>
<div class="cell" style="left:1190px;top:192px;width:6px;background:#e8e8e8;color:#ff8040;padding-left:2px;letter-spacing:0px"></div>
<div class="hdr" style="left:0;top:208px;width:22px;height:16px"></div>
<div class="cell" style="left:22px;top:208px;width:54px;background:#e8e8e8;color:#008000;text-align:right;padding-right:2px;letter-spacing:0px">1</div>
<div class="cell" style="left:77px;top:208px;width:105px;background:#e8e8e8;color:#008000;padding-left:2px;letter-spacing:0.062px">301-03-00307/00-1</div>
<div class="cell" style="left:183px;top:208px;width:166px;background:#e8e8e8;color:#008000;padding-left:2px;letter-spacing:-0.474px">HUSILLO CON BAYONETA</div>
<div class="cell" style="left:350px;top:208px;width:86px;background:#e8e8e8;color:#008000;padding-left:2px;letter-spacing:-1.0px">CORTE</div>
<div class="cell" style="left:437px;top:208px;width:68px;background:#e8e8e8;color:#008000;padding-left:2px;letter-spacing:-0.2px">Activo</div>
<div class="cell" style="left:506px;top:208px;width:169px;background:#e8e8e8;color:#008000;padding-left:2px;letter-spacing:-0.188px">AI316 - RDT 44.40</div>
<div class="cell" style="left:676px;top:208px;width:129px;background:#e8e8e8;color:#008000;padding-left:2px;letter-spacing:-0.4px">PULIDO</div>
<div class="cell" style="left:806px;top:208px;width:50px;background:#e8e8e8;color:#008000;padding-left:2px;letter-spacing:0.2px">130141</div>
<div class="cell" style="left:857px;top:208px;width:37px;background:#e8e8e8;color:#008000;padding-left:2px;letter-spacing:-1.0px">Si</div>
<div class="cell" style="left:895px;top:208px;width:109px;background:#e8e8e8;color:#008000;padding-left:2px;letter-spacing:-0.278px">Pieza para Ensamble</div>
<div class="cell" style="left:1005px;top:208px;width:107px;background:#e8e8e8;color:#008000;padding-left:8px;letter-spacing:-0.571px">2-TECMAR</div>
<div class="cell" style="left:1113px;top:208px;width:76px;background:#e8e8e8;color:#008000;text-align:right;padding-right:2px;letter-spacing:0px"></div>
<div class="cell" style="left:1190px;top:208px;width:6px;background:#e8e8e8;color:#008000;padding-left:2px;letter-spacing:0px"></div>
<div class="hdr" style="left:0;top:224px;width:22px;height:16px"></div>
<div class="cell" style="left:22px;top:224px;width:54px;background:#e8e8e8;color:#0000ff;text-align:right;padding-right:2px;letter-spacing:0px">1</div>
<div class="cell" style="left:77px;top:224px;width:105px;background:#e8e8e8;color:#0000ff;padding-left:2px;letter-spacing:0.062px">301-05-00322/02-1</div>
<div class="cell" style="left:183px;top:224px;width:166px;background:#e8e8e8;color:#0000ff;padding-left:2px;letter-spacing:0.0px">-02</div>
<div class="cell" style="left:350px;top:224px;width:86px;background:#e8e8e8;color:#0000ff;padding-left:2px;letter-spacing:-0.75px">TORNO</div>
<div class="cell" style="left:437px;top:224px;width:68px;background:#e8e8e8;color:#0000ff;padding-left:2px;letter-spacing:-0.222px">En Compras</div>
<div class="cell" style="left:506px;top:224px;width:169px;background:#e8e8e8;color:#0000ff;padding-left:2px;letter-spacing:-0.13px">AI316 - TBO 38.10 x 1.65</div>
<div class="cell" style="left:676px;top:224px;width:129px;background:#e8e8e8;color:#0000ff;padding-left:2px;letter-spacing:-0.429px">SIN TERMINACION</div>
<div class="cell" style="left:806px;top:224px;width:50px;background:#e8e8e8;color:#0000ff;padding-left:2px;letter-spacing:0.2px">130141</div>
<div class="cell" style="left:857px;top:224px;width:37px;background:#e8e8e8;color:#0000ff;padding-left:2px;letter-spacing:0.0px">No</div>
<div class="cell" style="left:895px;top:224px;width:109px;background:#e8e8e8;color:#0000ff;padding-left:2px;letter-spacing:-0.278px">Pieza para Ensamble</div>
<div class="cell" style="left:1005px;top:224px;width:107px;background:#e8e8e8;color:#0000ff;padding-left:8px;letter-spacing:-0.083px">1-Predefinido</div>
<div class="cell" style="left:1113px;top:224px;width:76px;background:#e8e8e8;color:#0000ff;text-align:right;padding-right:2px;letter-spacing:0px"></div>
<div class="cell" style="left:1190px;top:224px;width:6px;background:#e8e8e8;color:#0000ff;padding-left:2px;letter-spacing:0px"></div>
<div class="hdr" style="left:0;top:240px;width:22px;height:16px"></div>
<div class="cell" style="left:22px;top:240px;width:54px;background:#e8e8e8;color:#ff8040;text-align:right;padding-right:2px;letter-spacing:0px">1</div>
<div class="cell" style="left:77px;top:240px;width:105px;background:#e8e8e8;color:#ff8040;padding-left:2px;letter-spacing:0.062px">601-01-00063/00-1</div>
<div class="cell" style="left:183px;top:240px;width:166px;background:#e8e8e8;color:#ff8040;padding-left:2px;letter-spacing:-0.455px">EXTENSION 5"</div>
<div class="cell" style="left:350px;top:240px;width:86px;background:#e8e8e8;color:#ff8040;padding-left:2px;letter-spacing:-0.833px">SOLDADO</div>
<div class="cell" style="left:437px;top:240px;width:68px;background:#e8e8e8;color:#ff8040;padding-left:2px;letter-spacing:0.0px">En Tercero</div>
<div class="cell" style="left:506px;top:240px;width:169px;background:#e8e8e8;color:#ff8040;padding-left:2px;letter-spacing:-0.125px">AI304 - TBO 127.00 x 2.00</div>
<div class="cell" style="left:676px;top:240px;width:129px;background:#e8e8e8;color:#ff8040;padding-left:2px;letter-spacing:-0.429px">SIN TERMINACION</div>
<div class="cell" style="left:806px;top:240px;width:50px;background:#e8e8e8;color:#ff8040;padding-left:2px;letter-spacing:0.2px">130141</div>
<div class="cell" style="left:857px;top:240px;width:37px;background:#e8e8e8;color:#ff8040;padding-left:2px;letter-spacing:0.0px">No</div>
<div class="cell" style="left:895px;top:240px;width:109px;background:#e8e8e8;color:#ff8040;padding-left:2px;letter-spacing:-0.5px">Pieza</div>
<div class="cell" style="left:1005px;top:240px;width:107px;background:#e8e8e8;color:#ff8040;padding-left:8px;letter-spacing:-0.083px">1-Predefinido</div>
<div class="cell" style="left:1113px;top:240px;width:76px;background:#e8e8e8;color:#ff8040;text-align:right;padding-right:2px;letter-spacing:0px"></div>
<div class="cell" style="left:1190px;top:240px;width:6px;background:#e8e8e8;color:#ff8040;padding-left:2px;letter-spacing:0px"></div>
<div class="hdr" style="left:0;top:256px;width:22px;height:16px"></div>
<div class="cell" style="left:22px;top:256px;width:54px;background:#e8e8e8;color:#000000;text-align:right;padding-right:2px;letter-spacing:0px">1</div>
<div class="cell" style="left:77px;top:256px;width:105px;background:#e8e8e8;color:#000000;padding-left:2px;letter-spacing:0.062px">601-01-00344/00-1</div>
<div class="cell" style="left:183px;top:256px;width:166px;background:#e8e8e8;color:#000000;padding-left:2px;letter-spacing:-0.333px">TAPA</div>
<div class="cell" style="left:350px;top:256px;width:86px;background:#e8e8e8;color:#000000;padding-left:2px;letter-spacing:-0.75px">TORNO</div>
<div class="cell" style="left:437px;top:256px;width:68px;background:#e8e8e8;color:#000000;padding-left:2px;letter-spacing:-0.2px">Activo</div>
<div class="cell" style="left:506px;top:256px;width:169px;background:#e8e8e8;color:#000000;padding-left:2px;letter-spacing:-0.033px">1.1213 ( AISI 1055) - CHA 42.00</div>
<div class="cell" style="left:676px;top:256px;width:129px;background:#e8e8e8;color:#000000;padding-left:2px;letter-spacing:-0.4px">PULIDO</div>
<div class="cell" style="left:806px;top:256px;width:50px;background:#e8e8e8;color:#000000;padding-left:2px;letter-spacing:0.2px">130141</div>
<div class="cell" style="left:857px;top:256px;width:37px;background:#e8e8e8;color:#000000;padding-left:2px;letter-spacing:0.0px">No</div>
<div class="cell" style="left:895px;top:256px;width:109px;background:#e8e8e8;color:#000000;padding-left:2px;letter-spacing:-0.286px">Ensamble</div>
<div class="cell" style="left:1005px;top:256px;width:107px;background:#e8e8e8;color:#000000;padding-left:8px;letter-spacing:-0.083px">1-Predefinido</div>
<div class="cell" style="left:1113px;top:256px;width:76px;background:#e8e8e8;color:#000000;text-align:right;padding-right:2px;letter-spacing:0px"></div>
<div class="cell" style="left:1190px;top:256px;width:6px;background:#e8e8e8;color:#000000;padding-left:2px;letter-spacing:0px"></div>
<div class="hdr" style="left:0;top:272px;width:22px;height:16px"></div>
<div class="cell" style="left:22px;top:272px;width:54px;background:#e8e8e8;color:#000000;text-align:right;padding-right:2px;letter-spacing:0px">1</div>
<div class="cell" style="left:77px;top:272px;width:105px;background:#e8e8e8;color:#000000;padding-left:2px;letter-spacing:0.062px">601-01-00342/02-1</div>
<div class="cell" style="left:183px;top:272px;width:166px;background:#e8e8e8;color:#000000;padding-left:2px;letter-spacing:0.333px">-/02</div>
<div class="cell" style="left:350px;top:272px;width:86px;background:#e8e8e8;color:#000000;padding-left:2px;letter-spacing:-0.75px">TORNO</div>
<div class="cell" style="left:437px;top:272px;width:68px;background:#e8e8e8;color:#000000;padding-left:2px;letter-spacing:-0.2px">Activo</div>
<div class="cell" style="left:506px;top:272px;width:169px;background:#e8e8e8;color:#000000;padding-left:2px;letter-spacing:-0.033px">1.1213 ( AISI 1055) - CHA 42.00</div>
<div class="cell" style="left:676px;top:272px;width:129px;background:#e8e8e8;color:#000000;padding-left:2px;letter-spacing:-0.429px">SIN TERMINACION</div>
<div class="cell" style="left:806px;top:272px;width:50px;background:#e8e8e8;color:#000000;padding-left:2px;letter-spacing:0.2px">130141</div>
<div class="cell" style="left:857px;top:272px;width:37px;background:#e8e8e8;color:#000000;padding-left:2px;letter-spacing:0.0px">No</div>
<div class="cell" style="left:895px;top:272px;width:109px;background:#e8e8e8;color:#000000;padding-left:2px;letter-spacing:-0.278px">Pieza para Ensamble</div>
<div class="cell" style="left:1005px;top:272px;width:107px;background:#e8e8e8;color:#000000;padding-left:8px;letter-spacing:-0.083px">1-Predefinido</div>
<div class="cell" style="left:1113px;top:272px;width:76px;background:#e8e8e8;color:#000000;text-align:right;padding-right:2px;letter-spacing:0px"></div>
<div class="cell" style="left:1190px;top:272px;width:6px;background:#e8e8e8;color:#000000;padding-left:2px;letter-spacing:0px"></div>
<div class="hdr" style="left:0;top:288px;width:22px;height:16px"></div>
<div class="cell" style="left:22px;top:288px;width:54px;background:#e8e8e8;color:#ff8040;text-align:right;padding-right:2px;letter-spacing:0px">1</div>
<div class="cell" style="left:77px;top:288px;width:105px;background:#e8e8e8;color:#ff8040;padding-left:2px;letter-spacing:0.062px">601-01-00038/01-1</div>
<div class="cell" style="left:183px;top:288px;width:166px;background:#e8e8e8;color:#ff8040;padding-left:2px;letter-spacing:0.0px">-01</div>
<div class="cell" style="left:350px;top:288px;width:86px;background:#e8e8e8;color:#ff8040;padding-left:2px;letter-spacing:-0.75px">TORNO</div>
<div class="cell" style="left:437px;top:288px;width:68px;background:#e8e8e8;color:#ff8040;padding-left:2px;letter-spacing:0.0px">En Tercero</div>
<div class="cell" style="left:506px;top:288px;width:169px;background:#e8e8e8;color:#ff8040;padding-left:2px;letter-spacing:-0.188px">AI316 - RDT 50.80</div>
<div class="cell" style="left:676px;top:288px;width:129px;background:#e8e8e8;color:#ff8040;padding-left:2px;letter-spacing:-0.4px">PULIDO</div>
<div class="cell" style="left:806px;top:288px;width:50px;background:#e8e8e8;color:#ff8040;padding-left:2px;letter-spacing:0.2px">130141</div>
<div class="cell" style="left:857px;top:288px;width:37px;background:#e8e8e8;color:#ff8040;padding-left:2px;letter-spacing:0.0px">No</div>
<div class="cell" style="left:895px;top:288px;width:109px;background:#e8e8e8;color:#ff8040;padding-left:2px;letter-spacing:-0.278px">Pieza para Ensamble</div>
<div class="cell" style="left:1005px;top:288px;width:107px;background:#e8e8e8;color:#ff8040;padding-left:8px;letter-spacing:-0.083px">1-Predefinido</div>
<div class="cell" style="left:1113px;top:288px;width:76px;background:#e8e8e8;color:#ff8040;text-align:right;padding-right:2px;letter-spacing:0px"></div>
<div class="cell" style="left:1190px;top:288px;width:6px;background:#e8e8e8;color:#ff8040;padding-left:2px;letter-spacing:0px"></div>
<div class="hdr" style="left:0;top:304px;width:22px;height:16px"></div>
<div class="cell" style="left:22px;top:304px;width:54px;background:#e8e8e8;color:#000000;text-align:right;padding-right:2px;letter-spacing:0px">1</div>
<div class="cell" style="left:77px;top:304px;width:105px;background:#e8e8e8;color:#000000;padding-left:2px;letter-spacing:0.062px">601-01-00350/00-1</div>
<div class="cell" style="left:183px;top:304px;width:166px;background:#e8e8e8;color:#000000;padding-left:2px;letter-spacing:-0.6px">PORTA RETEN</div>
<div class="cell" style="left:350px;top:304px;width:86px;background:#e8e8e8;color:#000000;padding-left:2px;letter-spacing:-0.75px">TORNO</div>
<div class="cell" style="left:437px;top:304px;width:68px;background:#e8e8e8;color:#000000;padding-left:2px;letter-spacing:-0.2px">Activo</div>
<div class="cell" style="left:506px;top:304px;width:169px;background:#e8e8e8;color:#000000;padding-left:2px;letter-spacing:-0.118px">AI316 - RDL 130.00</div>
<div class="cell" style="left:676px;top:304px;width:129px;background:#e8e8e8;color:#000000;padding-left:2px;letter-spacing:-0.4px">PULIDO</div>
<div class="cell" style="left:806px;top:304px;width:50px;background:#e8e8e8;color:#000000;padding-left:2px;letter-spacing:0.2px">130141</div>
<div class="cell" style="left:857px;top:304px;width:37px;background:#e8e8e8;color:#000000;padding-left:2px;letter-spacing:0.0px">No</div>
<div class="cell" style="left:895px;top:304px;width:109px;background:#e8e8e8;color:#000000;padding-left:2px;letter-spacing:-0.5px">Pieza</div>
<div class="cell" style="left:1005px;top:304px;width:107px;background:#e8e8e8;color:#000000;padding-left:8px;letter-spacing:0.0px">3-Taller Tecmar</div>
<div class="cell" style="left:1113px;top:304px;width:76px;background:#e8e8e8;color:#000000;text-align:right;padding-right:2px;letter-spacing:0px"></div>
<div class="cell" style="left:1190px;top:304px;width:6px;background:#e8e8e8;color:#000000;padding-left:2px;letter-spacing:0px"></div>
<div class="hdr" style="left:0;top:320px;width:22px;height:16px"></div>
<div class="cell" style="left:22px;top:320px;width:54px;background:#e8e8e8;color:#0000ff;text-align:right;padding-right:2px;letter-spacing:0px">1</div>
<div class="cell" style="left:77px;top:320px;width:105px;background:#e8e8e8;color:#0000ff;padding-left:2px;letter-spacing:0.062px">310-05-00053/00-1</div>
<div class="cell" style="left:183px;top:320px;width:166px;background:#e8e8e8;color:#0000ff;padding-left:2px;letter-spacing:-0.625px">CLARABOYA</div>
<div class="cell" style="left:350px;top:320px;width:86px;background:#e8e8e8;color:#0000ff;padding-left:2px;letter-spacing:-0.75px">TORNO</div>
<div class="cell" style="left:437px;top:320px;width:68px;background:#e8e8e8;color:#0000ff;padding-left:2px;letter-spacing:-0.222px">En Compras</div>
<div class="cell" style="left:506px;top:320px;width:169px;background:#e8e8e8;color:#0000ff;padding-left:2px;letter-spacing:-0.211px">ACRILICO - CHA 25.00</div>
<div class="cell" style="left:676px;top:320px;width:129px;background:#e8e8e8;color:#0000ff;padding-left:2px;letter-spacing:-0.429px">SIN TERMINACION</div>
<div class="cell" style="left:806px;top:320px;width:50px;background:#e8e8e8;color:#0000ff;padding-left:2px;letter-spacing:0.2px">130141</div>
<div class="cell" style="left:857px;top:320px;width:37px;background:#e8e8e8;color:#0000ff;padding-left:2px;letter-spacing:0.0px">No</div>
<div class="cell" style="left:895px;top:320px;width:109px;background:#e8e8e8;color:#0000ff;padding-left:2px;letter-spacing:-0.5px">Pieza</div>
<div class="cell" style="left:1005px;top:320px;width:107px;background:#e8e8e8;color:#0000ff;padding-left:8px;letter-spacing:-0.083px">1-Predefinido</div>
<div class="cell" style="left:1113px;top:320px;width:76px;background:#e8e8e8;color:#0000ff;text-align:right;padding-right:2px;letter-spacing:0px"></div>
<div class="cell" style="left:1190px;top:320px;width:6px;background:#e8e8e8;color:#0000ff;padding-left:2px;letter-spacing:0px"></div>
<div class="hdr" style="left:0;top:336px;width:22px;height:16px"></div>
<div class="cell" style="left:22px;top:336px;width:54px;background:#e8e8e8;color:#ff8040;text-align:right;padding-right:2px;letter-spacing:0px">1</div>
<div class="cell" style="left:77px;top:336px;width:105px;background:#e8e8e8;color:#ff8040;padding-left:2px;letter-spacing:0.062px">601-01-00074/00-1</div>
<div class="cell" style="left:183px;top:336px;width:166px;background:#e8e8e8;color:#ff8040;padding-left:2px;letter-spacing:-0.083px">ARTEZA 6"A 5"</div>
<div class="cell" style="left:350px;top:336px;width:86px;background:#e8e8e8;color:#ff8040;padding-left:2px;letter-spacing:-0.833px">SOLDADO</div>
<div class="cell" style="left:437px;top:336px;width:68px;background:#e8e8e8;color:#ff8040;padding-left:2px;letter-spacing:0.0px">En Tercero</div>
<div class="cell" style="left:506px;top:336px;width:169px;background:#e8e8e8;color:#ff8040;padding-left:2px;letter-spacing:-0.125px">AI316 - TBO 127.00 x 2.00</div>
<div class="cell" style="left:676px;top:336px;width:129px;background:#e8e8e8;color:#ff8040;padding-left:2px;letter-spacing:-0.429px">SIN TERMINACION</div>
<div class="cell" style="left:806px;top:336px;width:50px;background:#e8e8e8;color:#ff8040;padding-left:2px;letter-spacing:0.2px">130141</div>
<div class="cell" style="left:857px;top:336px;width:37px;background:#e8e8e8;color:#ff8040;padding-left:2px;letter-spacing:0.0px">No</div>
<div class="cell" style="left:895px;top:336px;width:109px;background:#e8e8e8;color:#ff8040;padding-left:2px;letter-spacing:-0.278px">Pieza para Ensamble</div>
<div class="cell" style="left:1005px;top:336px;width:107px;background:#e8e8e8;color:#ff8040;padding-left:8px;letter-spacing:-0.083px">1-Predefinido</div>
<div class="cell" style="left:1113px;top:336px;width:76px;background:#e8e8e8;color:#ff8040;text-align:right;padding-right:2px;letter-spacing:0px"></div>
<div class="cell" style="left:1190px;top:336px;width:6px;background:#e8e8e8;color:#ff8040;padding-left:2px;letter-spacing:0px"></div>
<div class="hdr" style="left:0;top:352px;width:22px;height:16px"></div>
<div class="cell" style="left:22px;top:352px;width:54px;background:#e8e8e8;color:#000000;text-align:right;padding-right:2px;letter-spacing:0px">1</div>
<div class="cell" style="left:77px;top:352px;width:105px;background:#e8e8e8;color:#000000;padding-left:2px;letter-spacing:0.062px">001-19-00058/00-1</div>
<div class="cell" style="left:183px;top:352px;width:166px;background:#e8e8e8;color:#000000;padding-left:2px;letter-spacing:-1.0px">SOPORTE</div>
<div class="cell" style="left:350px;top:352px;width:86px;background:#e8e8e8;color:#000000;padding-left:2px;letter-spacing:-0.8px">CTE-CN</div>
<div class="cell" style="left:437px;top:352px;width:68px;background:#e8e8e8;color:#000000;padding-left:2px;letter-spacing:-0.2px">Activo</div>
<div class="cell" style="left:506px;top:352px;width:169px;background:#e8e8e8;color:#000000;padding-left:2px;letter-spacing:-0.133px">AI304 - CHA 6.30</div>
<div class="cell" style="left:676px;top:352px;width:129px;background:#e8e8e8;color:#000000;padding-left:2px;letter-spacing:-0.429px">BLASTING</div>
<div class="cell" style="left:806px;top:352px;width:50px;background:#e8e8e8;color:#000000;padding-left:2px;letter-spacing:0.2px">130141</div>
<div class="cell" style="left:857px;top:352px;width:37px;background:#e8e8e8;color:#000000;padding-left:2px;letter-spacing:0.0px">No</div>
<div class="cell" style="left:895px;top:352px;width:109px;background:#e8e8e8;color:#000000;padding-left:2px;letter-spacing:-0.5px">Pieza</div>
<div class="cell" style="left:1005px;top:352px;width:107px;background:#e8e8e8;color:#000000;padding-left:8px;letter-spacing:-0.083px">1-Predefinido</div>
<div class="cell" style="left:1113px;top:352px;width:76px;background:#e8e8e8;color:#000000;text-align:right;padding-right:2px;letter-spacing:0px"></div>
<div class="cell" style="left:1190px;top:352px;width:6px;background:#e8e8e8;color:#000000;padding-left:2px;letter-spacing:0px"></div>
<div class="hdr" style="left:0;top:368px;width:22px;height:16px"></div>
<div class="cell" style="left:22px;top:368px;width:54px;background:#e8e8e8;color:#ff8040;text-align:right;padding-right:2px;letter-spacing:0px">2</div>
<div class="cell" style="left:77px;top:368px;width:105px;background:#e8e8e8;color:#ff8040;padding-left:2px;letter-spacing:0.062px">001-12-03100/00-1</div>
<div class="cell" style="left:183px;top:368px;width:166px;background:#e8e8e8;color:#ff8040;padding-left:2px;letter-spacing:-0.8px">FLECHA</div>
<div class="cell" style="left:350px;top:368px;width:86px;background:#e8e8e8;color:#ff8040;padding-left:2px;letter-spacing:-0.8px">CTE-CN</div>
<div class="cell" style="left:437px;top:368px;width:68px;background:#e8e8e8;color:#ff8040;padding-left:2px;letter-spacing:0.0px">En Tercero</div>
<div class="cell" style="left:506px;top:368px;width:169px;background:#e8e8e8;color:#ff8040;padding-left:2px;letter-spacing:-0.133px">AI304 - CHA 3.00</div>
<div class="cell" style="left:676px;top:368px;width:129px;background:#e8e8e8;color:#ff8040;padding-left:2px;letter-spacing:-0.429px">BLASTING</div>
<div class="cell" style="left:806px;top:368px;width:50px;background:#e8e8e8;color:#ff8040;padding-left:2px;letter-spacing:0.2px">130141</div>
<div class="cell" style="left:857px;top:368px;width:37px;background:#e8e8e8;color:#ff8040;padding-left:2px;letter-spacing:0.0px">No</div>
<div class="cell" style="left:895px;top:368px;width:109px;background:#e8e8e8;color:#ff8040;padding-left:2px;letter-spacing:-0.5px">Pieza</div>
<div class="cell" style="left:1005px;top:368px;width:107px;background:#e8e8e8;color:#ff8040;padding-left:8px;letter-spacing:-0.333px">2-CN</div>
<div class="cell" style="left:1113px;top:368px;width:76px;background:#e8e8e8;color:#ff8040;text-align:right;padding-right:2px;letter-spacing:0px"></div>
<div class="cell" style="left:1190px;top:368px;width:6px;background:#e8e8e8;color:#ff8040;padding-left:2px;letter-spacing:0px"></div>
<div class="hdr" style="left:0;top:384px;width:22px;height:16px"></div>
<div class="cell" style="left:22px;top:384px;width:54px;background:#e8e8e8;color:#008080;text-align:right;padding-right:2px;letter-spacing:0px">4</div>
<div class="cell" style="left:77px;top:384px;width:105px;background:#e8e8e8;color:#008080;padding-left:2px;letter-spacing:0.062px">001-25-00161/00-1</div>
<div class="cell" style="left:183px;top:384px;width:166px;background:#e8e8e8;color:#008080;padding-left:2px;letter-spacing:-0.667px">MORSETO</div>
<div class="cell" style="left:350px;top:384px;width:86px;background:#e8e8e8;color:#008080;padding-left:2px;letter-spacing:-1.0px">FRESA</div>
<div class="cell" style="left:437px;top:384px;width:68px;background:#e8e8e8;color:#008080;padding-left:2px;letter-spacing:-0.125px">En Taller</div>
<div class="cell" style="left:506px;top:384px;width:169px;background:#e8e8e8;color:#008080;padding-left:2px;letter-spacing:-0.083px">AI304 - PLA 50.80 x 25.40</div>
<div class="cell" style="left:676px;top:384px;width:129px;background:#e8e8e8;color:#008080;padding-left:2px;letter-spacing:-0.429px">SIN TERMINACION</div>
<div class="cell" style="left:806px;top:384px;width:50px;background:#e8e8e8;color:#008080;padding-left:2px;letter-spacing:0.2px">130141</div>
<div class="cell" style="left:857px;top:384px;width:37px;background:#e8e8e8;color:#008080;padding-left:2px;letter-spacing:0.0px">No</div>
<div class="cell" style="left:895px;top:384px;width:109px;background:#e8e8e8;color:#008080;padding-left:2px;letter-spacing:-0.278px">Pieza para Ensamble</div>
<div class="cell" style="left:1005px;top:384px;width:107px;background:#e8e8e8;color:#008080;padding-left:8px;letter-spacing:0.0px">2-Taller Tecmar</div>
<div class="cell" style="left:1113px;top:384px;width:76px;background:#e8e8e8;color:#008080;text-align:right;padding-right:2px;letter-spacing:0.0px">5053</div>
<div class="cell" style="left:1190px;top:384px;width:6px;background:#e8e8e8;color:#008080;padding-left:2px;letter-spacing:0px"></div>
<div class="hdr" style="left:0;top:400px;width:22px;height:16px"></div>
<div class="cell" style="left:22px;top:400px;width:54px;background:#e8e8e8;color:#000000;text-align:right;padding-right:2px;letter-spacing:0px">1</div>
<div class="cell" style="left:77px;top:400px;width:105px;background:#e8e8e8;color:#000000;padding-left:2px;letter-spacing:0.062px">001-11-00169/00-1</div>
<div class="cell" style="left:183px;top:400px;width:166px;background:#e8e8e8;color:#000000;padding-left:2px;letter-spacing:-0.409px">CAPUCHON (IGNIS MR10B-)</div>
<div class="cell" style="left:350px;top:400px;width:86px;background:#e8e8e8;color:#000000;padding-left:2px;letter-spacing:-0.75px">TORNO</div>
<div class="cell" style="left:437px;top:400px;width:68px;background:#e8e8e8;color:#000000;padding-left:2px;letter-spacing:-0.2px">Activo</div>
<div class="cell" style="left:506px;top:400px;width:169px;background:#e8e8e8;color:#000000;padding-left:2px;letter-spacing:-0.5px">APM NEGRO - RDT 45.00</div>
<div class="cell" style="left:676px;top:400px;width:129px;background:#e8e8e8;color:#000000;padding-left:2px;letter-spacing:-0.429px">SIN TERMINACION</div>
<div class="cell" style="left:806px;top:400px;width:50px;background:#e8e8e8;color:#000000;padding-left:2px;letter-spacing:0.2px">130141</div>
<div class="cell" style="left:857px;top:400px;width:37px;background:#e8e8e8;color:#000000;padding-left:2px;letter-spacing:0.0px">No</div>
<div class="cell" style="left:895px;top:400px;width:109px;background:#e8e8e8;color:#000000;padding-left:2px;letter-spacing:-0.278px">Pieza para Ensamble</div>
<div class="cell" style="left:1005px;top:400px;width:107px;background:#e8e8e8;color:#000000;padding-left:8px;letter-spacing:-0.083px">1-Predefinido</div>
<div class="cell" style="left:1113px;top:400px;width:76px;background:#e8e8e8;color:#000000;text-align:right;padding-right:2px;letter-spacing:0px"></div>
<div class="cell" style="left:1190px;top:400px;width:6px;background:#e8e8e8;color:#000000;padding-left:2px;letter-spacing:0px"></div>
<div class="hdr" style="left:0;top:416px;width:22px;height:16px"></div>
<div class="cell" style="left:22px;top:416px;width:54px;background:#e8e8e8;color:#000000;text-align:right;padding-right:2px;letter-spacing:0px">1</div>
<div class="cell" style="left:77px;top:416px;width:105px;background:#e8e8e8;color:#000000;padding-left:2px;letter-spacing:0.062px">001-34-00550/00-1</div>
<div class="cell" style="left:183px;top:416px;width:166px;background:#e8e8e8;color:#000000;padding-left:2px;letter-spacing:-0.333px">TUBO DE ALUMINIO</div>
<div class="cell" style="left:350px;top:416px;width:86px;background:#e8e8e8;color:#000000;padding-left:2px;letter-spacing:-0.75px">TORNO</div>
<div class="cell" style="left:437px;top:416px;width:68px;background:#e8e8e8;color:#000000;padding-left:2px;letter-spacing:-0.2px">Activo</div>
<div class="cell" style="left:506px;top:416px;width:169px;background:#e8e8e8;color:#000000;padding-left:2px;letter-spacing:-0.13px">AI304 - TBO 25.40 x 1.50</div>
<div class="cell" style="left:676px;top:416px;width:129px;background:#e8e8e8;color:#000000;padding-left:2px;letter-spacing:-0.429px">SIN TERMINACION</div>
<div class="cell" style="left:806px;top:416px;width:50px;background:#e8e8e8;color:#000000;padding-left:2px;letter-spacing:0.2px">130141</div>
<div class="cell" style="left:857px;top:416px;width:37px;background:#e8e8e8;color:#000000;padding-left:2px;letter-spacing:0.0px">No</div>
<div class="cell" style="left:895px;top:416px;width:109px;background:#e8e8e8;color:#000000;padding-left:2px;letter-spacing:-0.278px">Pieza para Ensamble</div>
<div class="cell" style="left:1005px;top:416px;width:107px;background:#e8e8e8;color:#000000;padding-left:8px;letter-spacing:-0.429px">1-TECMAR</div>
<div class="cell" style="left:1113px;top:416px;width:76px;background:#e8e8e8;color:#000000;text-align:right;padding-right:2px;letter-spacing:0px"></div>
<div class="cell" style="left:1190px;top:416px;width:6px;background:#e8e8e8;color:#000000;padding-left:2px;letter-spacing:0px"></div>
</div>
<div class="a" style="left:1198px;top:167px;width:16px;height:421px;background:repeating-conic-gradient(#d4d0c8 0 25%,#ffffff 0 50%) 0 0/2px 2px"></div>
<div class="sb" style="left:1198px;top:167px;width:16px;height:16px"></div><div class="a" style="left:1202px;top:173px;border-left:4px solid transparent;border-right:4px solid transparent;border-bottom:4px solid #000"></div>
<div class="sb" style="left:1198px;top:183px;width:16px;height:81px"></div>
<div class="sb" style="left:1198px;top:572px;width:16px;height:16px"></div><div class="a" style="left:1202px;top:578px;border-left:4px solid transparent;border-right:4px solid transparent;border-top:4px solid #000"></div>
<div class="a" style="left:2px;top:588px;width:1196px;height:15px;background:repeating-conic-gradient(#d4d0c8 0 25%,#ffffff 0 50%) 0 0/2px 2px"></div>
<div class="sb" style="left:2px;top:588px;width:16px;height:15px"></div><div class="a" style="left:7px;top:591px;border-top:4px solid transparent;border-bottom:4px solid transparent;border-right:4px solid #000"></div>
<div class="sb" style="left:18px;top:588px;width:1075px;height:15px"></div>
<div class="sb" style="left:1182px;top:588px;width:16px;height:15px"></div><div class="a" style="left:1189px;top:591px;border-top:4px solid transparent;border-bottom:4px solid transparent;border-left:4px solid #000"></div>
<div class="a" style="left:1198px;top:588px;width:16px;height:16px;background:#d4d0c8"></div>
<div class="a" style="left:2px;top:603px;width:1212px;height:2px;background:#484848"></div>
<div class="a" style="left:2px;top:605px;width:1212px;height:14px;background:#d4d0c8;box-shadow:inset 1px 0 0 #606060,inset -1px -1px 0 #fff"></div>
<div class="t" style="left:1000px;top:606px;width:207px;text-align:right;letter-spacing:-0.19px">Cantidad de Filas: 122</div>
<div class="a" style="left:0;top:619px;width:1217px;height:66px;background:#d1d1d1"></div>
<div class="a" style="left:1214px;top:612px;width:3px;height:7px;background:#d1d1d1"></div>
<div class="a" style="left:0;top:685px;width:1221px;height:1px;background:#dedad2"></div>
<div class="a" style="left:1220px;top:128px;width:1px;height:552px;background:#808080"></div>
<div class="a" style="left:1217px;top:680px;width:4px;height:1px;background:#000"></div>
<div class="a" style="left:0;top:649px;width:1px;height:32px;background:#808080"></div>
<div class="a" style="left:8px;top:624px;width:20px;height:20px;background:#ff0000;border:1px solid #000"></div>
<div class="t lbl" style="left:29px;top:628px;letter-spacing:-0.455px;">Sin Procesos</div>
<div class="a" style="left:98px;top:624px;width:20px;height:20px;background:#0000c0;border:1px solid #000"></div>
<div class="t lbl" style="left:121px;top:628px;letter-spacing:-0.222px;">En Compras</div>
<div class="a" style="left:188px;top:624px;width:20px;height:20px;background:#007000;border:1px solid #000"></div>
<div class="t lbl" style="left:215px;top:628px;letter-spacing:-0.143px;">De Stock</div>
<div class="a" style="left:270px;top:624px;width:20px;height:20px;background:#ff8000;border:1px solid #000"></div>
<div class="t lbl" style="left:295px;top:628px;letter-spacing:0.0px;">En Tercero</div>
<div class="a" style="left:362px;top:624px;width:20px;height:20px;background:#008080;border:1px solid #000"></div>
<div class="t lbl" style="left:383px;top:628px;letter-spacing:0.062px;">En Taller Interno</div>
<div class="a" style="left:476px;top:624px;width:20px;height:20px;background:#000000;border:1px solid #000"></div>
<div class="t lbl" style="left:498px;top:628px;letter-spacing:-0.188px;">Activo/Disponible</div>
<div class="btn" style="left:8px;top:650px;width:225px;height:29px"></div>
<svg class="a" style="left:116px;top:650px" width="30" height="29"><path d="M1 0.5 L26.5 28.5" stroke="#154a84" stroke-width="1.3" fill="none"/><path d="M3 0.5 L28.5 28.5" stroke="#fff" stroke-width="1" fill="none"/></svg>
<div class="bt" style="left:14px;top:658px;letter-spacing:0.037px">Reservar de Stock</div>
<div class="bt" style="left:146px;top:658px;letter-spacing:0.054px">Verif. Proceso</div>
<div class="btn" style="left:236px;top:650px;width:117px;height:29px"></div>
<div class="bt" style="left:245px;top:658px;letter-spacing:-0.173px">Calcular Tiempos</div>
<div class="btn" style="left:356px;top:650px;width:116px;height:29px"></div>
<div class="bt" style="left:364px;top:658px;letter-spacing:-0.269px">Consultar Centros</div>
<div class="btn" style="left:1114px;top:650px;width:103px;height:27px"></div>
<div class="bt" style="left:1152px;top:657px;letter-spacing:-0.175px"><u>S</u>alir</div>
<div class="a" style="left:0;top:686px;width:1223px;height:2px;background:#6a6a6a"></div>
<div class="a" style="left:0;top:688px;width:1222px;height:2px;background:#d4d0c8"></div>
</body></html>
